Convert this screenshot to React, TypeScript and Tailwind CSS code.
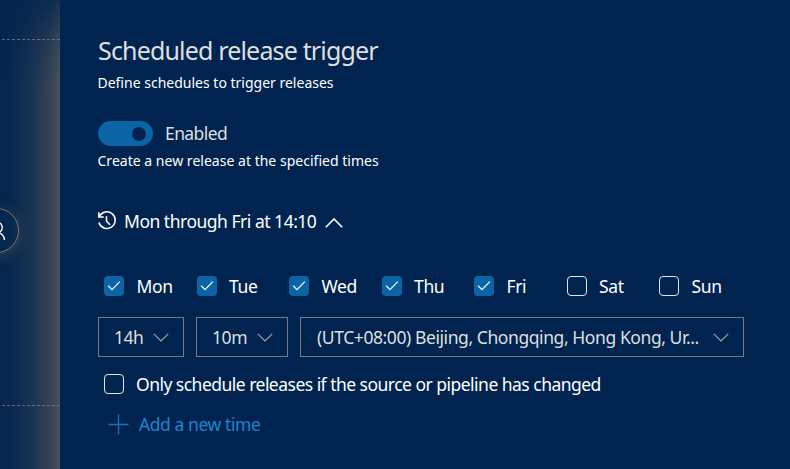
import React from "react";

const days = [
  { name: "Mon", on: true },
  { name: "Tue", on: true },
  { name: "Wed", on: true },
  { name: "Thu", on: true },
  { name: "Fri", on: true },
  { name: "Sat", on: false },
  { name: "Sun", on: false },
];

function Checkbox({ on }: { on: boolean }) {
  return on ? (
    <span className="flex h-5 w-5 shrink-0 items-center justify-center rounded-[4px] bg-[#0b64a6]">
      <svg width="20" height="20" viewBox="0 0 20 20" fill="none" stroke="#f2f5f9" strokeWidth="1.3">
        <path d="M4.2 9.8 8 13.6 15.8 5.6" />
      </svg>
    </span>
  ) : (
    <span className="h-5 w-5 shrink-0 rounded-[4px] border border-[#e4e6ea]" />
  );
}

function ChevronDown() {
  return (
    <svg className="shrink-0" width="16" height="9" viewBox="0 0 16 9" fill="none" stroke="#a6a6a6" strokeWidth="1.1">
      <path d="M.8.8 8 8 15.2.8" />
    </svg>
  );
}

function Select({ children, box }: { children: React.ReactNode; box: string }) {
  return (
    <div className={`flex h-10 items-center justify-between border border-[#7d7b76] pl-[15px] pr-[14px] text-[17.5px] text-[#dfdfdf] ${box}`}>
      {children}
      <ChevronDown />
    </div>
  );
}

export default function App() {
  return (
    <div className="flex h-[469px] w-[790px] overflow-hidden whitespace-nowrap bg-[#00244f] font-['Noto_Sans','Open_Sans',sans-serif] text-white">
      <aside className="relative w-[60px] shrink-0">
        <svg className="absolute left-0 top-0" width="60" height="469" fill="none">
          <path d="M2 39.5H60M2 405.5H60" stroke="#67686a" strokeDasharray="3 2" />
        </svg>
        <div className="absolute -left-[26px] top-[208px] h-[45px] w-[45px] rounded-full border border-[#77716b] bg-[#00244f] shadow-[0_3px_14px_rgba(150,125,105,0.35)]" />
        <svg className="absolute left-0 top-[215px]" width="12" height="30" fill="none" stroke="#fff" strokeWidth="1.4">
          <circle cx="-3" cy="12.5" r="5.3" />
          <path d="M-3 17.7A7.4 7.4 0 0 1 4.5 25" />
        </svg>
      </aside>
      <main className="relative h-[600px] w-[730px] shrink-0 bg-[#00244f] pl-[38px] shadow-[0_24px_62px_rgba(142,124,102,0.95),0_4px_14px_rgba(138,124,102,0.2)]">
        <h1 className="mt-[33px] h-[34px] text-[25px] leading-[34px] tracking-[-0.83px] text-[#dfdfdf]">Scheduled release trigger</h1>
        <p className="-ml-[0.5px] mt-[6px] h-5 text-[14px] leading-5">Define schedules to trigger releases</p>
        <div className="mt-7 flex h-[25px] items-center">
          <span className="flex h-[25px] w-[55px] items-center justify-end rounded-full bg-[#0b64a6] pr-[7px]">
            <span className="h-[14px] w-[14px] rounded-full bg-[#00244f]" />
          </span>
          <span className="ml-[12px] text-[17.5px] tracking-[-0.6px] text-[#dfdfdf]">Enabled</span>
        </div>
        <p className="-ml-[0.5px] mt-[5px] h-5 text-[14px] leading-5 tracking-[0.02px]">Create a new release at the specified times</p>
        <div className="mt-[38px] flex h-6 items-center">
          <svg width="20" height="20" viewBox="0 0 20 20" fill="none" stroke="#fff" strokeWidth="1.5">
            <path d="M1.3 5.8A8.3 8.3 0 1 1 .9 11.5M.8 1.2V6.1H5.7M8.5 5.2V10.2L12 13.7" />
          </svg>
          <span className="ml-[6px] text-[17.5px] leading-6 tracking-[-0.49px]">Mon through Fri at 14:10</span>
          <svg className="ml-[9px] mt-1" width="18" height="10" viewBox="0 0 18 10" fill="none" stroke="#fff" strokeWidth="1.6">
            <path d="M.8 9.2 9 1 17.2 9.2" />
          </svg>
        </div>
        <div className="ml-[6px] mt-[43px] grid h-5 grid-cols-[repeat(7,92.5px)]">
          {days.map((d) => (
            <label key={d.name} className="flex items-center gap-[12.5px]">
              <Checkbox on={d.on} />
              <span className="text-[17.5px] leading-5 tracking-[-0.35px]">{d.name}</span>
            </label>
          ))}
        </div>
        <div className="mt-[21px] flex gap-3">
          <Select box="w-[86px]"><span className="tracking-[-0.5px]">14h</span></Select>
          <Select box="w-[92px]"><span className="tracking-[-0.4px]">10m</span></Select>
          <Select box="w-[444px]"><span className="ml-px tracking-[-0.42px]">(UTC+08:00) Beijing, Chongqing, Hong Kong, Ur...</span></Select>
        </div>
        <label className="ml-[6px] mt-[17px] flex h-5 items-center gap-3">
          <Checkbox on={false} />
          <span className="text-[17.5px] leading-5 tracking-[-0.52px]">Only schedule releases if the source or pipeline has changed</span>
        </label>
        <div className="ml-[10px] mt-[18px] flex h-6 items-center gap-[10px] text-[17.5px] tracking-[-0.42px] text-[#1f83d2]">
          <svg width="21" height="21" viewBox="0 0 21 21" stroke="#1873bd" strokeWidth="1.4">
            <path d="M.5 10.5h20M10.5.5v20" />
          </svg>
          <span>Add a new time</span>
        </div>
      </main>
    </div>
  );
}
